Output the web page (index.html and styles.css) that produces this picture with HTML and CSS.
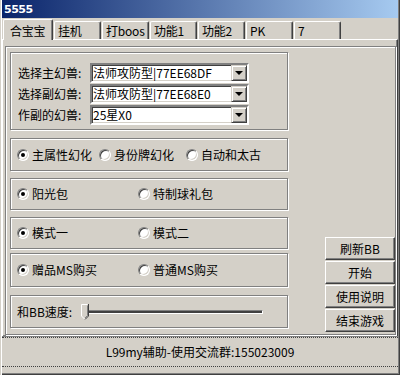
FILE: index.html
```html
<!DOCTYPE html>
<html lang="zh-CN">
<head>
    <meta charset="UTF-8">
    <meta name="viewport" content="width=device-width, initial-scale=1.0">
    <title>5555</title>
    <link rel="stylesheet" href="styles.css">
</head>
<body>
    <div class="window">
        <div class="titlebar">5555</div>

        <div class="tabs">
            <div class="tab active">合宝宝</div>
            <div class="tab">挂机</div>
            <div class="tab">打boos</div>
            <div class="tab">功能1</div>
            <div class="tab">功能2</div>
            <div class="tab">PK</div>
            <div class="tab">7</div>
        </div>

        <div class="panel">
            <div class="frame">
                <div class="groups">
                    <div class="group pets">
                        <div class="field">
                            <span class="label">选择主幻兽:</span>
                            <div class="combo"><span class="value">法师攻防型|77EE68DF</span><span class="drop"></span></div>
                        </div>
                        <div class="field">
                            <span class="label">选择副幻兽:</span>
                            <div class="combo"><span class="value">法师攻防型|77EE68E0</span><span class="drop"></span></div>
                        </div>
                        <div class="field">
                            <span class="label">作副的幻兽:</span>
                            <div class="combo"><span class="value">25星X0</span><span class="drop"></span></div>
                        </div>
                    </div>

                    <div class="group opts three first-opts">
                        <label class="opt"><span class="radio checked"></span>主属性幻化</label>
                        <label class="opt"><span class="radio"></span>身份牌幻化</label>
                        <label class="opt"><span class="radio"></span>自动和太古</label>
                    </div>

                    <div class="group opts two">
                        <label class="opt"><span class="radio checked"></span>阳光包</label>
                        <label class="opt"><span class="radio"></span>特制球礼包</label>
                    </div>

                    <div class="group opts two">
                        <label class="opt"><span class="radio checked"></span>模式一</label>
                        <label class="opt"><span class="radio"></span>模式二</label>
                    </div>

                    <div class="group opts two buy">
                        <label class="opt"><span class="radio checked"></span>赠品MS购买</label>
                        <label class="opt"><span class="radio"></span>普通MS购买</label>
                    </div>

                    <div class="group speed">
                        <span class="label short">和BB速度:</span>
                        <div class="slider">
                            <svg class="thumb" width="8" height="16" viewBox="0 0 8 16">
                                <path d="M0.5 12V0.5H7.5V12L4 15.5Z" fill="#d4d0c8"/>
                                <path d="M0.5 12V0.5H6.5" stroke="#fff" fill="none"/>
                                <path d="M0.5 12L4 15.5" stroke="#fff" fill="none"/>
                                <path d="M7.5 0V12L4 15.5" stroke="#404040" fill="none"/>
                                <path d="M6.5 1.5V11.5L4 14" stroke="#808080" fill="none"/>
                            </svg>
                        </div>
                    </div>
                </div>

                <div class="buttons">
                    <button class="btn">刷新BB</button>
                    <button class="btn">开始</button>
                    <button class="btn">使用说明</button>
                    <button class="btn">结束游戏</button>
                </div>
            </div>
        </div>

        <div class="status">L99my辅助-使用交流群:155023009</div>
    </div>
</body>
</html>
```

FILE: styles.css
```css
* {
    box-sizing: border-box;
}

body {
    margin: 0;
    width: 400px;
    height: 375px;
    overflow: hidden;
    background-color: #d4d0c8;
    font-family: "Noto Sans CJK SC", sans-serif;
    font-size: 12px;
    line-height: 14px;
    color: #000;
}

.window {
    height: 375px;
    padding: 0 2px 2px 2px;
    box-shadow: inset 1px 0 #d4d0c8, inset 2px 0 #fff,
                inset -1px -1px #404040, inset -2px -2px #808080;
}

.titlebar {
    height: 18px;
    padding-left: 2px;
    background: linear-gradient(to right, #0a246a, #a6caf0);
    color: #fff;
    font-family: "DejaVu Sans", sans-serif;
    font-weight: bold;
    font-size: 11px;
    letter-spacing: -0.5px;
    line-height: 19px;
}

/* tab strip */
.tabs {
    display: flex;
    align-items: flex-end;
    height: 21px;
}

.tab {
    width: 47px;
    height: 18px;
    margin-left: 1px;
    padding-left: 3px;
    border: 1px solid #fff;
    border-right-color: #404040;
    border-bottom: 0;
    border-radius: 2px 2px 0 0;
    box-shadow: inset -1px 0 #808080;
    line-height: 17px;
    white-space: nowrap;
    letter-spacing: -0.2px;
}

.tab.active {
    position: relative;
    z-index: 1;
    width: 50px;
    height: 21px;
    margin-bottom: -1px;
    padding: 2px 0 0 6px;
    background-color: #d4d0c8;
}

.panel {
    height: 298px;
    padding: 6px 0 0 2px;
    border: 1px solid #fff;
    border-right-color: #404040;
    border-bottom-color: #404040;
    box-shadow: inset -1px -1px #808080;
}

.frame {
    display: flex;
    width: 391px;
    height: 289px;
    padding: 5px 0 0 4px;
    border: 1px solid #808080;
    box-shadow: inset 1px 1px #fff, 1px 1px #fff;
}

.groups {
    width: 278px;
}

.group {
    height: 32px;
    margin-top: 7px;
    border: 1px solid #808080;
    box-shadow: inset 1px 1px #fff, 1px 1px #fff;
}

/* pet selection */
.group.pets {
    height: 78px;
    margin-top: 0;
    padding: 10px 0 0 7px;
}

.field {
    display: flex;
    align-items: center;
    height: 20px;
    margin-bottom: 1px;
}

.label {
    width: 72px;
    white-space: nowrap;
}

.combo {
    display: flex;
    align-items: center;
    width: 159px;
    height: 20px;
    padding-left: 1px;
    background: #fff;
    border: 2px solid;
    border-color: #808080 #fff #fff #808080;
    box-shadow: inset 1px 1px #404040, inset -1px -1px #d4d0c8;
}

.combo .value {
    flex: 1;
    white-space: nowrap;
    overflow: hidden;
    line-height: 16px;
}

.drop {
    display: flex;
    align-items: center;
    justify-content: center;
    width: 16px;
    height: 16px;
    background: #d4d0c8;
    border: 1px solid;
    border-color: #d4d0c8 #404040 #404040 #d4d0c8;
    box-shadow: inset 1px 1px #fff, inset -1px -1px #808080;
}

.drop::after {
    content: "";
    border-style: solid;
    border-width: 4px 4px 0 4px;
    border-color: #000 transparent transparent transparent;
}

/* radio rows */
.opts {
    display: grid;
    align-items: center;
    padding-left: 6px;
}

.opts.three {
    grid-template-columns: 82px 87px auto;
}

.opts.two {
    grid-template-columns: 121px auto;
}

.first-opts {
    height: 33px;
    margin-top: 8px;
}

.buy {
    height: 34px;
    margin-top: 4px;
}

.opt {
    display: flex;
    align-items: center;
    white-space: nowrap;
}

.radio {
    width: 12px;
    height: 12px;
    margin-right: 3px;
    border-radius: 50%;
    background: #fff;
    border: 1px solid;
    border-color: #808080 #fff #fff #808080;
    box-shadow: inset 1px 1px #404040, inset -1px -1px #d4d0c8;
}

.radio.checked::after {
    content: "";
    display: block;
    width: 4px;
    height: 4px;
    margin: 3px auto 0;
    border-radius: 50%;
    background: #000;
}

/* speed slider */
.group.speed {
    display: flex;
    align-items: center;
    height: 33px;
    margin-top: 8px;
    padding-left: 6px;
}

.label.short {
    width: 65px;
}

.slider {
    position: relative;
    width: 181px;
    height: 4px;
    background: #404040;
    border: 1px solid;
    border-color: #808080 #fff #fff #808080;
}

.thumb {
    position: absolute;
    left: -2px;
    top: -7px;
}

/* side buttons */
.buttons {
    display: flex;
    flex-direction: column;
    gap: 1px;
    align-self: flex-end;
    width: 70px;
    margin: 0 0 2px auto;
}

.btn {
    height: 23px;
    padding: 0;
    font: inherit;
    color: #000;
    background: #d4d0c8;
    border: 1px solid;
    border-color: #fff #404040 #404040 #fff;
    box-shadow: inset -1px -1px #808080, inset 1px 1px #d4d0c8;
}

.status {
    height: 30px;
    border-top: 1px dotted #404040;
    border-bottom: 1px dotted #404040;
    box-shadow: 0 -1px #808080;
    text-align: center;
    line-height: 28px;
}
```
